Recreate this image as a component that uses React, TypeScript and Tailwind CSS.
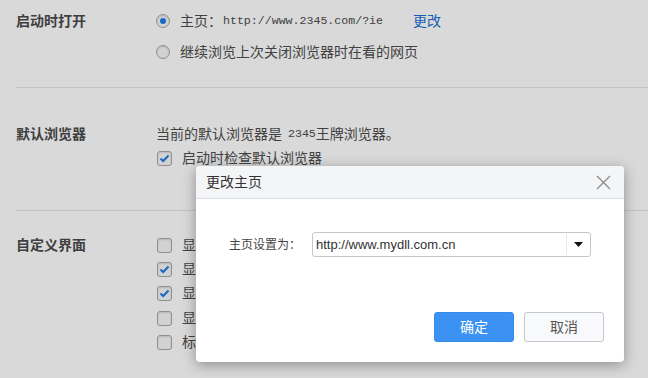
import React from "react";

const cjk = "font-['Liberation_Sans','Noto_Sans_CJK_SC',sans-serif]";

function Radio({ checked }: { checked?: boolean }) {
  return (
    <span className="w-[14px] h-[14px] rounded-full border border-[#a9a9a9] bg-[#f7f7f7] shadow-[inset_0_1px_2px_rgba(0,0,0,0.15)] flex items-center justify-center shrink-0">
      {checked && <span className="w-[6px] h-[6px] rounded-full bg-[#1e7be6]"></span>}
    </span>
  );
}

function Check({ checked }: { checked?: boolean }) {
  return (
    <span className="w-[15px] h-[15px] rounded-[3px] border border-[#a9a9a9] bg-[#f7f7f7] shadow-[inset_0_1px_2px_rgba(0,0,0,0.12)] flex items-center justify-center shrink-0">
      {checked && (
        <svg width="11" height="9" viewBox="0 0 11 9">
          <path d="M1.5 4.5 L4.2 7 L9.5 1.5" fill="none" stroke="#1e7be6" strokeWidth="2" />
        </svg>
      )}
    </span>
  );
}

function App() {
  const uiItems = [
    { text: "显示主页按钮", checked: false },
    { text: "显示收藏栏", checked: true },
    { text: "显示状态栏", checked: true },
    { text: "显示侧边栏", checked: false },
    { text: "标签页显示关闭按钮", checked: false },
  ];

  return (
    <div className={`relative w-[648px] h-[378px] overflow-hidden bg-white text-[#4d4d4d] text-[14px] ${cjk}`}>
      {/* 启动时打开 */}
      <div className="ml-[16px] h-[88px] pt-[10px] border-b border-[#e6e6e6] flex">
        <div className="w-[140px] h-[22px] flex items-center font-bold text-[#4a4a4a]">启动时打开</div>
        <div className="flex flex-col gap-[9px]">
          <div className="h-[22px] flex items-center">
            <Radio checked />
            <span className="ml-[10px]">主页：</span>
            <span className="font-['Liberation_Mono',monospace] text-[11.6px] ml-[1px]">http://www.2345.com/?ie</span>
            <span className="ml-[30px] text-[#1a6fd6]">更改</span>
          </div>
          <div className="h-[22px] flex items-center">
            <Radio />
            <span className="ml-[10px]">继续浏览上次关闭浏览器时在看的网页</span>
          </div>
        </div>
      </div>

      {/* 默认浏览器 */}
      <div className="ml-[16px] h-[123px] pt-[34px] border-b border-[#e6e6e6] flex">
        <div className="w-[140px] h-[24px] flex items-center font-bold text-[#4a4a4a]">默认浏览器</div>
        <div className="flex flex-col">
          <div className="h-[24px] flex items-center">
            <span>当前的默认浏览器是</span>
            <span className="font-['Liberation_Mono',monospace] text-[11.6px] ml-[6px]">2345</span>
            <span>王牌浏览器。</span>
          </div>
          <div className="h-[24px] flex items-center pl-[1px]">
            <Check checked />
            <span className="ml-[10px]">启动时检查默认浏览器</span>
          </div>
        </div>
      </div>

      {/* 自定义界面 */}
      <div className="ml-[16px] pt-[22px] flex">
        <div className="w-[140px] h-[24px] flex items-center font-bold text-[#4a4a4a]">自定义界面</div>
        <div className="flex flex-col">
          {uiItems.map((item) => (
            <div key={item.text} className="h-[24.3px] flex items-center pl-[1px]">
              <Check checked={item.checked} />
              <span className="ml-[10px]">{item.text}</span>
            </div>
          ))}
        </div>
      </div>

      {/* overlay */}
      <div className="absolute inset-0 bg-black/[0.15]"></div>

      {/* 更改主页 dialog */}
      <div className="absolute left-[196px] top-[166px] w-[428px] h-[196px] bg-white rounded-[4px] shadow-[0_3px_14px_rgba(0,0,0,0.35)] overflow-hidden flex flex-col">
        <div className="h-[33px] bg-[#f4f5f7] border-b border-[#dadde2] flex items-center justify-between pl-[10px] pr-[13px]">
          <span className="text-[14px] text-[#333]">更改主页</span>
          <svg width="15" height="15" viewBox="0 0 15 15">
            <path d="M1 1 L14 14 M14 1 L1 14" stroke="#8a8a8a" strokeWidth="1.3" fill="none" />
          </svg>
        </div>
        <div className="flex items-center pt-[33px] pl-[33px]">
          <span className="text-[12px] text-[#444] w-[83px] shrink-0">主页设置为：</span>
          <div className="w-[279px] h-[25px] border border-[#c4c7cc] rounded-[3px] flex items-center">
            <span className="flex-1 pl-[3px] text-[13px] text-[#333] font-['Liberation_Sans',sans-serif]">http://www.mydll.com.cn</span>
            <span className="w-px h-[21px] bg-[#e8e8e8]"></span>
            <span className="w-[23px] flex items-center justify-center">
              <svg width="9" height="5" viewBox="0 0 9 5">
                <path d="M0 0 H9 L4.5 5 Z" fill="#111" />
              </svg>
            </span>
          </div>
        </div>
        <div className="flex justify-end gap-[10px] pr-[20px] mt-auto mb-[20px]">
          <button className="w-[80px] h-[30px] rounded-[3px] bg-[#3b92f3] border border-[#348be8] text-white text-[14px]">确定</button>
          <button className="w-[80px] h-[30px] rounded-[3px] bg-[#f8f9fb] border border-[#c6c8cc] text-[#555] text-[14px]">取消</button>
        </div>
      </div>
    </div>
  );
}

export default App;
